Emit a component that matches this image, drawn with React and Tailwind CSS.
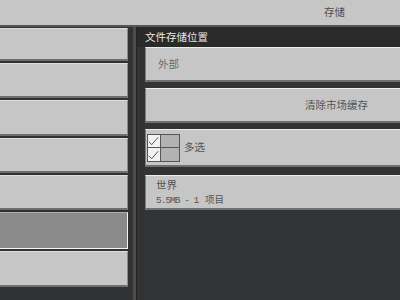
import React from "react";

function LeftBtn({ h, selected }) {
  if (selected) {
    return (
      <div
        className="shrink-0 bg-[#8a8a8a] border-t border-t-[#b0b0b0] border-r border-r-[#f4f4f4] border-b border-b-[#f4f4f4]"
        style={{ height: h }}
      />
    );
  }
  return (
    <div
      className="shrink-0 bg-[#c6c6c6] border-t border-t-[#dedede] border-r border-r-[#8a8a8a] border-b-2 border-b-[#6e6e6e]"
      style={{ height: h }}
    />
  );
}

function Check() {
  return (
    <svg width="13" height="13" viewBox="0 0 13 13" className="block">
      <path d="M1 8 L4 11 L11 3" fill="none" stroke="#4a4a4a" strokeWidth="1" />
    </svg>
  );
}

const btn =
  "shrink-0 bg-[#c6c6c6] border-t border-t-[#ececec] border-l border-l-[#7c7c7c] border-b-2 border-b-[#6f6f6f]";

export default function App() {
  return (
    <div className="w-[400px] h-[300px] overflow-hidden bg-[#313233] flex flex-col font-['Noto_Sans_CJK_SC','Noto_Sans',sans-serif]">
      <div className="h-[27px] shrink-0 bg-[#c6c6c6] border-b-2 border-b-[#555555] flex items-center pl-[324px] text-[10.5px] text-[#4e4e4e] leading-none">
        存储
      </div>
      <div className="flex-1 flex min-h-0">
        <div className="w-[128px] shrink-0 flex flex-col gap-[2px] pt-[1px]">
          <LeftBtn h={33} />
          <LeftBtn h={35} />
          <LeftBtn h={36} />
          <LeftBtn h={35} />
          <LeftBtn h={35} />
          <LeftBtn h={37} selected />
          <LeftBtn h={36} />
        </div>
        <div className="w-[5px] shrink-0" />
        <div className="w-[3px] shrink-0 bg-[#4c4c4c]" />
        <div className="w-[1px] shrink-0 bg-[#232323]" />
        <div className="flex-1 flex flex-col bg-[#323334] min-w-0">
          <div className="h-[20px] shrink-0 bg-[#2a2a2b] flex items-center pl-[8px] text-[10.5px] text-[#e8e8e8] leading-none">
            文件存储位置
          </div>
          <div className="flex flex-col pl-[8px]">
            <div className={`${btn} h-[35px] flex items-center pl-[12px] text-[10.5px] text-[#6a6a6a] leading-none`}>
              外部
            </div>
            <div className={`${btn} h-[35px] mt-[6px] flex items-center pl-[159px] text-[10.5px] text-[#555555] leading-none`}>
              清除市场缓存
            </div>
            <div className={`${btn} h-[38px] mt-[6px] flex items-center pl-[1px]`}>
              <div className="w-[33px] h-[28px] border border-[#555555] flex flex-col">
                <div className="flex h-[13px] border-b border-[#555555]">
                  <div className="w-[13px] bg-[#f2f2f2] border-r border-[#555555] flex items-center justify-center">
                    <Check />
                  </div>
                  <div className="flex-1 bg-[#b2b2b2]" />
                </div>
                <div className="flex flex-1">
                  <div className="w-[13px] bg-[#f2f2f2] border-r border-[#555555] flex items-center justify-center">
                    <Check />
                  </div>
                  <div className="flex-1 bg-[#b2b2b2]" />
                </div>
              </div>
              <span className="ml-[4px] text-[10.5px] text-[#555555] leading-none">多选</span>
            </div>
            <div className={`${btn} h-[35px] mt-[8px] flex flex-col justify-center pl-[10px] gap-[4px] pt-[1px]`}>
              <span className="text-[10.5px] text-[#555555] leading-none">世界</span>
              <span className="text-[#555555] leading-none whitespace-pre flex items-baseline">
                <span className="font-['Liberation_Mono',monospace] text-[9.5px] tracking-[-1px]">5.5MB - 1 </span>
                <span className="text-[9.5px] ml-[2px]">项目</span>
              </span>
            </div>
          </div>
        </div>
      </div>
    </div>
  );
}
